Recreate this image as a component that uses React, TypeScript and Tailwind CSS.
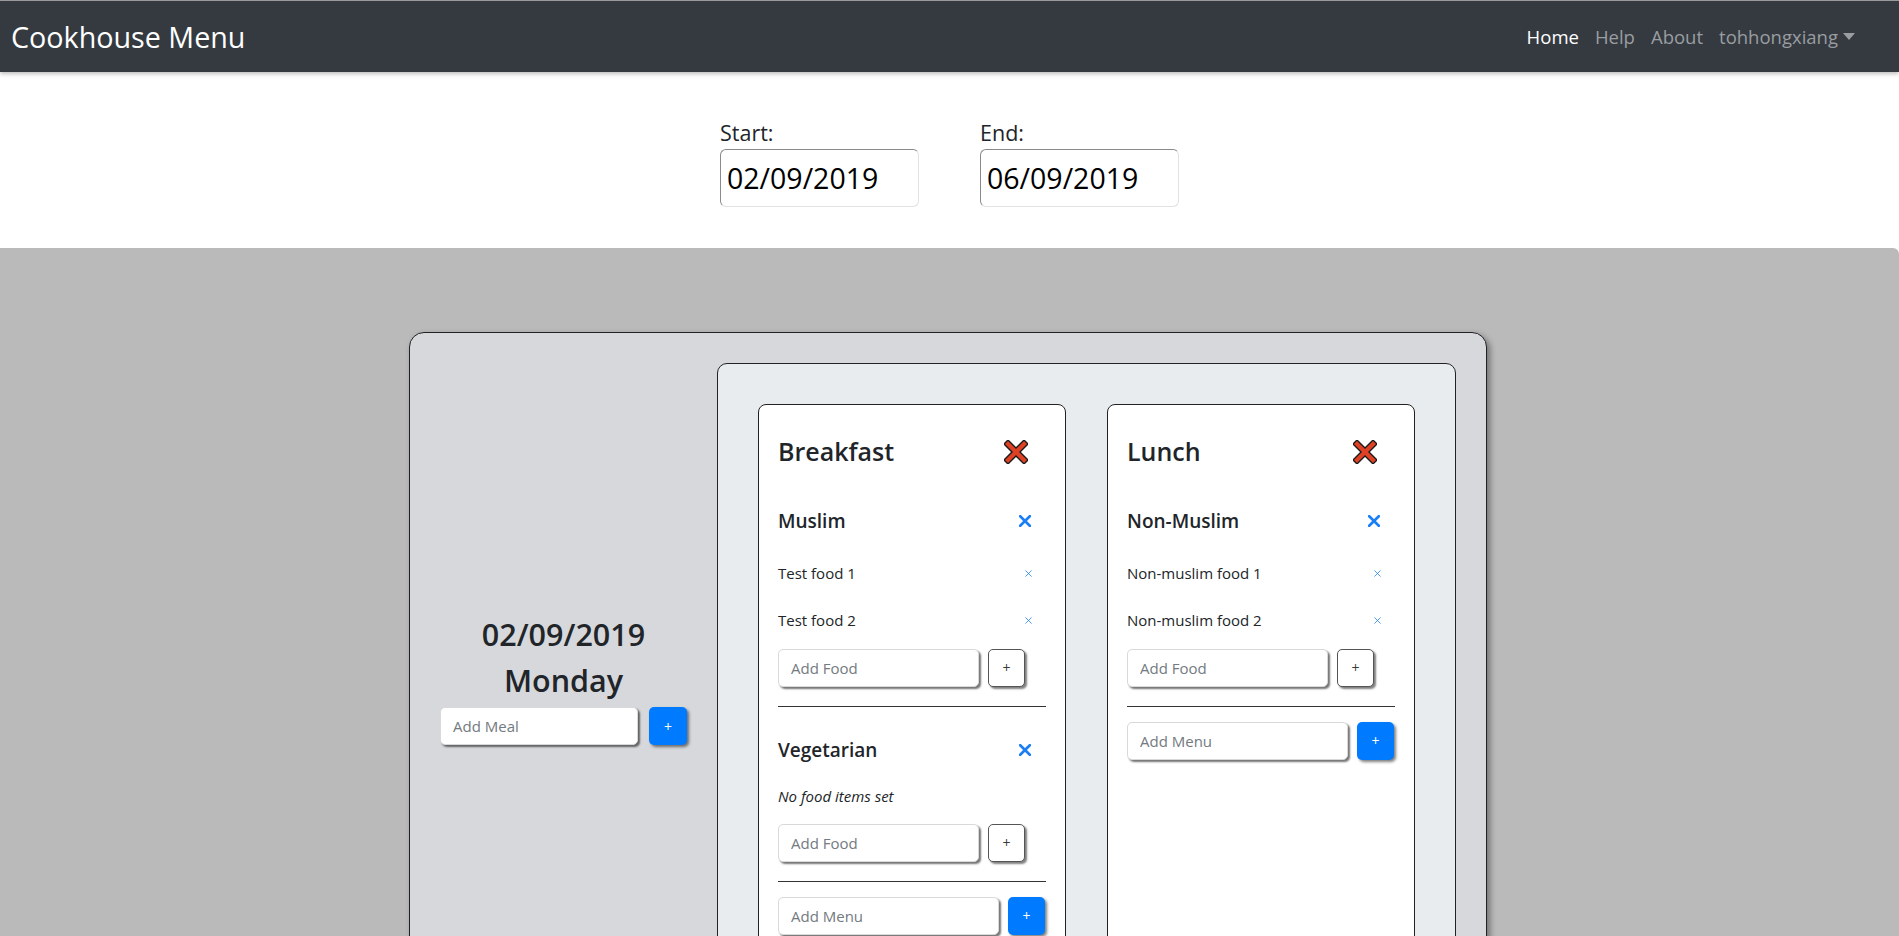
import React from "react";

const meals = [
  {
    name: "Breakfast",
    sections: [
      { name: "Muslim", foods: ["Test food 1", "Test food 2"] },
      { name: "Vegetarian", foods: [] as string[] },
    ],
    menuFocused: true,
  },
  {
    name: "Lunch",
    sections: [{ name: "Non-Muslim", foods: ["Non-muslim food 1", "Non-muslim food 2"] }],
    menuFocused: false,
  },
];

function RedCross() {
  return (
    <svg width="24" height="24" viewBox="0 0 24 24" className="block">
      <line x1="4" y1="4" x2="20" y2="20" stroke="#1b1b1b" strokeWidth="7" strokeLinecap="square" />
      <line x1="20" y1="4" x2="4" y2="20" stroke="#1b1b1b" strokeWidth="7" strokeLinecap="square" />
      <line x1="4" y1="4" x2="20" y2="20" stroke="#de4124" strokeWidth="4.2" strokeLinecap="square" />
      <line x1="20" y1="4" x2="4" y2="20" stroke="#de4124" strokeWidth="4.2" strokeLinecap="square" />
    </svg>
  );
}

function BlueX({ size, weight }: { size: number; weight: number }) {
  return (
    <svg width={size} height={size} viewBox="0 0 10 10" className="block">
      <path d="M1 1L9 9M9 1L1 9" stroke="#1a7ef5" strokeWidth={weight} strokeLinecap="round" />
    </svg>
  );
}

function AddRow({ placeholder, inputW, blue, focused }: { placeholder: string; inputW: string; blue?: boolean; focused?: boolean }) {
  return (
    <div className="flex h-[38px] items-stretch gap-[9px]">
      <input
        placeholder={placeholder}
        className={`${inputW} rounded-[5px] border border-[#d9d9d9] bg-white px-[12px] text-[15px] text-[#333] placeholder:text-[#737a80] shadow-[2px_2px_2px_rgba(0,0,0,0.55)] outline-none`}
      />
      <button
        className={`w-[37px] rounded-[5px] text-[14px] leading-none ${
          blue
            ? "bg-[#007bff] text-white shadow-[2px_2px_3px_rgba(0,0,0,0.5)]"
            : "border border-[#555] bg-white text-[#3a3a3a] shadow-[2px_2px_2px_rgba(0,0,0,0.5)]"
        } ${focused ? "shadow-[0_0_0_3px_rgba(0,123,255,0.45)]" : ""}`}
      >
        +
      </button>
    </div>
  );
}

function Section({ name, foods, first }: { name: string; foods: string[]; first: boolean }) {
  return (
    <div className={first ? "mt-[35px]" : "mt-[29px]"}>
      <div className="flex h-[28px] items-center justify-between">
        <span className="text-[19px] font-semibold text-[#212529]">{name}</span>
        <span className="mr-[15px]"><BlueX size={12} weight={2.2} /></span>
      </div>
      {foods.length > 0 ? (
        <div className="mt-[15px]">
          {foods.map((f) => (
            <div key={f} className="flex h-[47px] items-center justify-between">
              <span className="text-[15px] text-[#212529]">{f}</span>
              <span className="mr-[14px]"><BlueX size={7} weight={1.1} /></span>
            </div>
          ))}
        </div>
      ) : (
        <div className="mt-[20px] flex h-[24px] items-center text-[15px] italic text-[#212529]">No food items set</div>
      )}
      <div className={foods.length > 0 ? "mt-[5px]" : "mt-[16px]"}>
        <AddRow placeholder="Add Food" inputW="w-[201px]" />
      </div>
      <div className="mt-[19px] h-px bg-[#333]" />
    </div>
  );
}

function MealCard({ meal }: { meal: (typeof meals)[number] }) {
  return (
    <div className="w-[308px] rounded-[8px] border border-[#222] bg-white px-[19px] pb-[21px]">
      <div className="mt-[27px] flex h-[40px] items-center justify-between">
        <span className="text-[25px] font-semibold text-[#212529]">{meal.name}</span>
        <span className="mr-[18px]"><RedCross /></span>
      </div>
      {meal.sections.map((s, i) => (
        <Section key={s.name} name={s.name} foods={s.foods} first={i === 0} />
      ))}
      <div className="mt-[15px]">
        <AddRow placeholder="Add Menu" inputW="w-[221px]" blue focused={meal.menuFocused} />
      </div>
    </div>
  );
}

export default function App() {
  return (
    <div className="min-h-screen bg-white font-['Open_Sans',sans-serif]">
      <nav className="relative z-10 flex h-[72px] items-center justify-between border-t border-[#9a9a9a] bg-[#343a40] pl-[11px] pr-[44px] shadow-[0_2px_4px_rgba(0,0,0,0.25)]">
        <span className="text-[28.7px] text-white">Cookhouse Menu</span>
        <div className="flex items-center gap-[16px] text-[18.5px]">
          <span className="text-white">Home</span>
          <span className="text-[#9a9da0]">Help</span>
          <span className="text-[#9a9da0]">About</span>
          <span className="flex items-center gap-[5px] text-[#9a9da0]">
            tohhongxiang
            <svg width="12" height="7" viewBox="0 0 12 7">
              <path d="M0 0H12L6 7Z" fill="#9a9da0" />
            </svg>
          </span>
        </div>
      </nav>

      <section className="flex h-[176px] justify-center gap-[61px] pt-[46px]">
        {[
          ["Start:", "02/09/2019"],
          ["End:", "06/09/2019"],
        ].map(([label, value]) => (
          <div key={label} className="flex flex-col">
            <label className="h-[28px] text-[21.5px] leading-[30px] text-[#212529]">{label}</label>
            <input
              defaultValue={value}
              className="mt-[3px] h-[58px] w-[199px] rounded-[6px] border border-t-[#8a8a8a] border-l-[#8a8a8a] border-r-[#e2e2e2] border-b-[#e2e2e2] px-[6px] text-[28.5px] text-black outline-none"
            />
          </div>
        ))}
      </section>

      <section className="rounded-tr-[6px] bg-[#bababa] pt-[84px] pb-[60px]">
        <div className="ml-[409px] flex w-[1078px] rounded-[15px] border border-[#222] bg-[#d6d8db] py-[30px] pr-[30px] shadow-[3px_3px_6px_rgba(0,0,0,0.4)]">
          <div className="flex w-[307px] flex-col items-center justify-center pb-[5px]">
            <div className="text-center text-[30.5px] font-semibold leading-[46px] text-[#212529]">
              <div>02/09/2019</div>
              <div>Monday</div>
            </div>
            <div className="mt-[4px] flex h-[38px] items-stretch gap-[11px]">
              <input
                placeholder="Add Meal"
                className="w-[198px] rounded-[5px] border border-[#d9d9d9] bg-white px-[12px] text-[15px] placeholder:text-[#737a80] shadow-[2px_2px_2px_rgba(0,0,0,0.55)] outline-none"
              />
              <button className="w-[38px] rounded-[5px] bg-[#007bff] text-[14px] text-white shadow-[2px_2px_3px_rgba(0,0,0,0.5)]">
                +
              </button>
            </div>
          </div>
          <div className="flex items-start gap-[41px] rounded-[10px] border border-[#222] bg-[#e9ecef] p-[40px]">
            {meals.map((m) => (
              <div key={m.name} className="flex self-stretch">
                <MealCard meal={m} />
              </div>
            ))}
          </div>
        </div>
      </section>
    </div>
  );
}
